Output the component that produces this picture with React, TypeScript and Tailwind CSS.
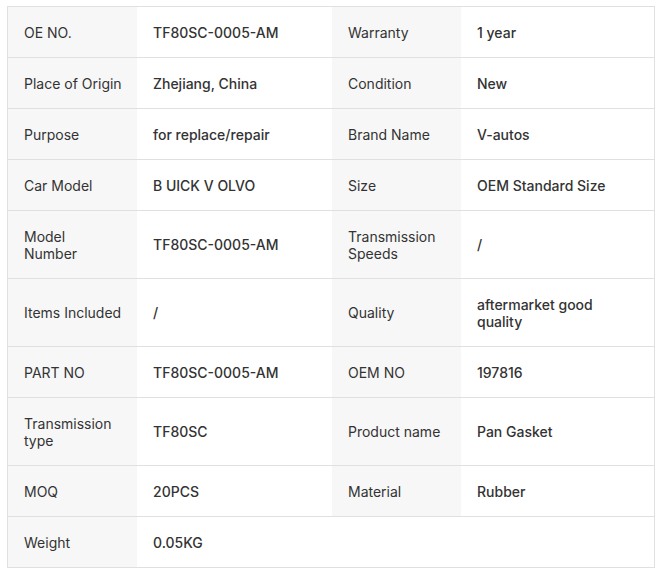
const rows: [string, string, string?, string?][] = [
  ["OE NO.", "TF80SC-0005-AM", "Warranty", "1 year"],
  ["Place of Origin", "Zhejiang, China", "Condition", "New"],
  ["Purpose", "for replace/repair", "Brand Name", "V-autos"],
  ["Car Model", "B UICK V OLVO", "Size", "OEM Standard Size"],
  ["Model\nNumber", "TF80SC-0005-AM", "Transmission Speeds", "/"],
  ["Items Included", "/", "Quality", "aftermarket good quality"],
  ["PART NO", "TF80SC-0005-AM", "OEM NO", "197816"],
  ["Transmission type", "TF80SC", "Product name", "Pan Gasket"],
  ["MOQ", "20PCS", "Material", "Rubber"],
  ["Weight", "0.05KG"],
];

function Label({ text }: { text?: string }) {
  return (
    <div
      className={
        "flex items-center whitespace-pre-line py-[16.5px] pl-4 pr-2 text-[14px] leading-[17px] text-[#333] " +
        (text ? "bg-[#f7f7f7]" : "bg-white")
      }
    >
      {text}
    </div>
  );
}

function Value({ text }: { text?: string }) {
  return (
    <div className="flex items-center bg-white px-4 py-[16.5px] text-[14px] font-medium leading-[17px] text-[#333]">
      {text}
    </div>
  );
}

export default function App() {
  return (
    <div className="min-h-screen bg-white pl-[7px] pt-[6px] font-['Inter',sans-serif]">
      <div className="w-[648px] border border-[#e0e0e0]">
        {rows.map(([l1, v1, l2, v2], i) => (
          <div
            key={i}
            className={
              "grid grid-cols-[129px_195px_129px_193px] " +
              (i < rows.length - 1 ? "border-b border-[#e0e0e0]" : "")
            }
          >
            <Label text={l1} />
            <Value text={v1} />
            <Label text={l2} />
            <Value text={v2} />
          </div>
        ))}
      </div>
    </div>
  );
}
